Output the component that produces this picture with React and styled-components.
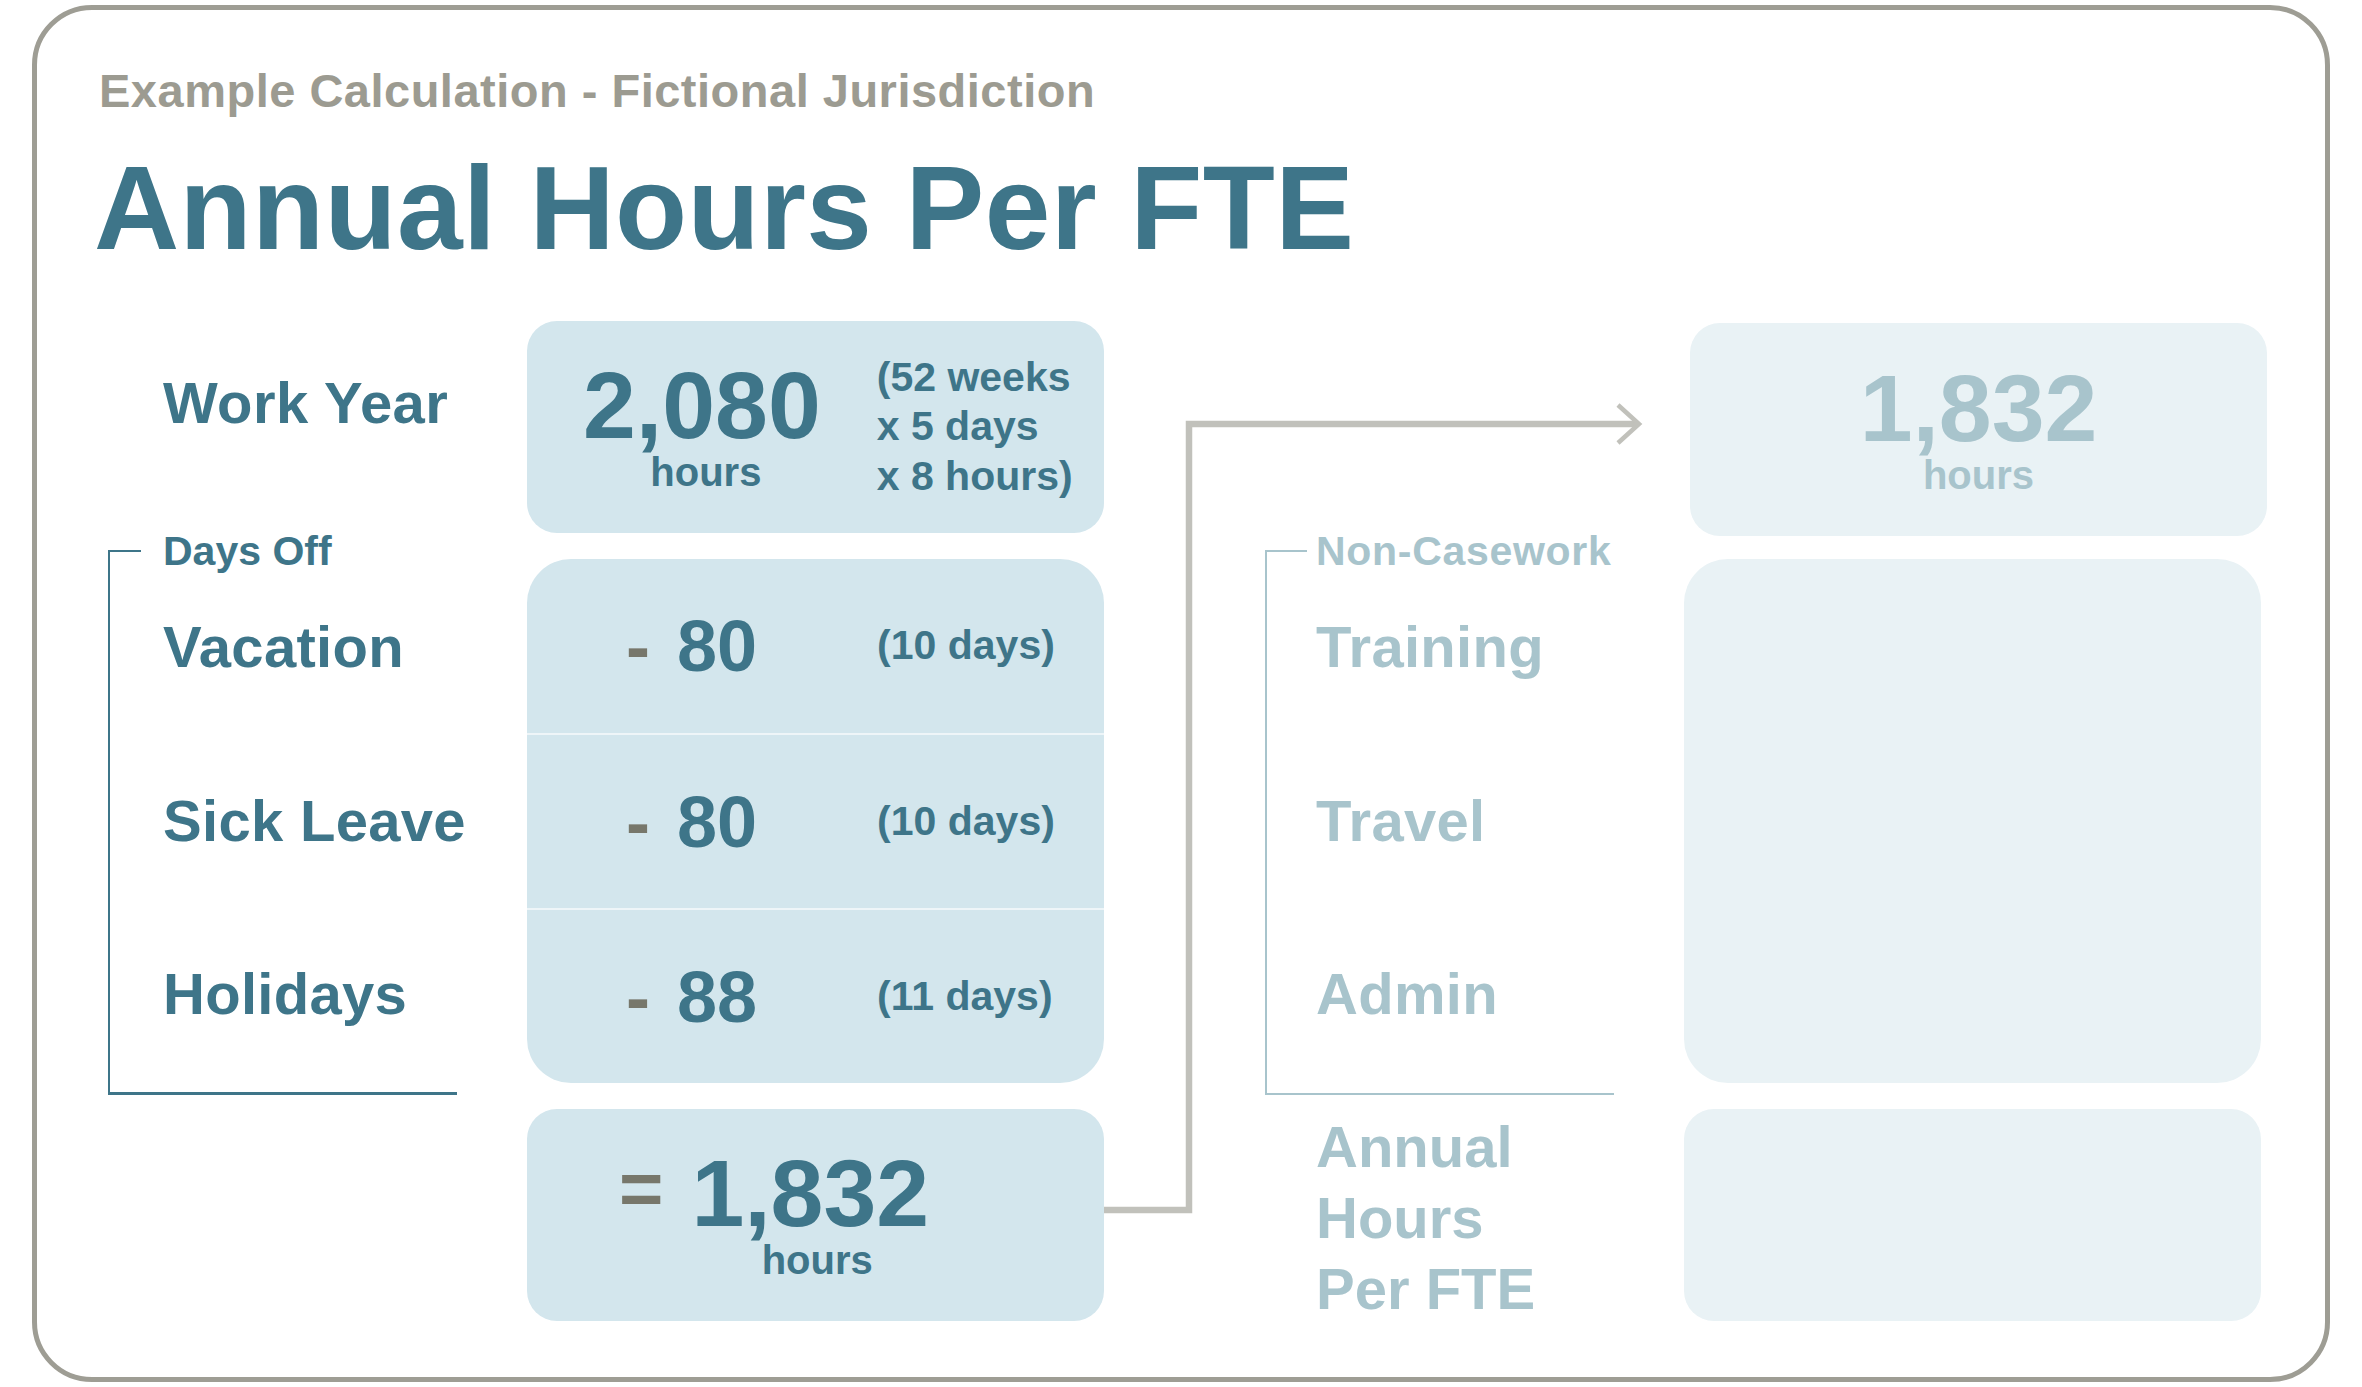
import React from 'react';
import styled, { createGlobalStyle } from 'styled-components';

const TEAL = '#3e7589';
const TEAL_FADED = '#a8c4cc';
const PANEL = '#d3e6ed';
const PANEL_FADED = '#e9f2f5';
const STONE = '#9c9b91';
const SLATE = '#77776b';
const WIRE = '#c1c1bb';

const GlobalStyle = createGlobalStyle`
  body {
    margin: 0;
    background: #fff;
    font-family: 'Liberation Sans', Arial, sans-serif;
    font-weight: 700;
  }
`;

const deductions = [
  { label: 'Vacation', hours: 80, days: 10 },
  { label: 'Sick Leave', hours: 80, days: 10 },
  { label: 'Holidays', hours: 88, days: 11 },
];

const nonCasework = ['Training', 'Travel', 'Admin'];

const App = () => (
  <>
    <GlobalStyle />
    <Card>
      <Eyebrow>Example Calculation - Fictional Jurisdiction</Eyebrow>
      <Title>Annual Hours Per FTE</Title>
      <Diagram>
        <Connector viewBox="0 0 580 1000">
          <path
            d="M0 889 H85 V103 H532"
            fill="none"
            stroke={WIRE}
            strokeWidth="6.5"
            strokeLinejoin="miter"
          />
          <polyline
            points="514,84 535,103 514,122"
            fill="none"
            stroke={WIRE}
            strokeWidth="4.5"
            strokeLinejoin="miter"
          />
        </Connector>

        <RowLabel>Work Year</RowLabel>
        <Panel $col={2} $row={1} $pad={56}>
          <Figure>
            <BigNumber>2,080</BigNumber>
            <Unit $offset={8}>hours</Unit>
          </Figure>
          <Note $gap={56}>
            (52 weeks
            <br />x 5 days
            <br />x 8 hours)
          </Note>
        </Panel>

        <Bracket $col={1} $color={TEAL} $tick={33} $weight={3}>
          <BracketHeading $inset={53} $color={TEAL}>
            Days Off
          </BracketHeading>
          {deductions.map(d => (
            <LabelRow key={d.label} $inset={53} $color={TEAL}>
              {d.label}
            </LabelRow>
          ))}
        </Bracket>
        <Panel $col={2} $row={2} $column $radius={44}>
          {deductions.map(d => (
            <DeductionRow key={d.label}>
              <Minus>-</Minus>
              <Amount>{d.hours}</Amount>
              <Note $gap={120}>({d.days} days)</Note>
            </DeductionRow>
          ))}
        </Panel>

        <Panel $col={2} $row={3} $pad={92}>
          <Equals>=</Equals>
          <Figure $gap={28}>
            <BigNumber>1,832</BigNumber>
            <Unit $offset={14}>hours</Unit>
          </Figure>
        </Panel>

        <Panel $col={5} $row={1} $faded $nudge $justify="center">
          <Figure $faded>
            <BigNumber>1,832</BigNumber>
            <Unit>hours</Unit>
          </Figure>
        </Panel>

        <Bracket $col={4} $color={TEAL_FADED} $tick={42} $weight={2.5}>
          <BracketHeading $inset={49} $color={TEAL_FADED} $spacing={0.7}>
            Non-Casework
          </BracketHeading>
          {nonCasework.map(label => (
            <LabelRow key={label} $inset={49} $color={TEAL_FADED}>
              {label}
            </LabelRow>
          ))}
        </Bracket>
        <Panel $col={5} $row={2} $faded $radius={44} />

        <StackedLabel>
          Annual
          <br />
          Hours
          <br />
          Per FTE
        </StackedLabel>
        <Panel $col={5} $row={3} $faded />
      </Diagram>
    </Card>
  </>
);

const Card = styled.main`
  box-sizing: border-box;
  width: 2298px;
  margin: 5px 0 5px 32px;
  padding: 53px 64px 56px 57px;
  border: 5px solid #9e9d94;
  border-radius: 60px;
`;

const Eyebrow = styled.p`
  margin: 0 0 0 5px;
  font-size: 47px;
  line-height: 56px;
  letter-spacing: 0.5px;
  color: ${STONE};
`;

const Title = styled.h1`
  margin: 24px 0 0;
  font-size: 118px;
  line-height: 130px;
  letter-spacing: 0.4px;
  font-weight: 700;
  color: ${TEAL};
`;

const Diagram = styled.section`
  display: grid;
  grid-template-columns: 419px 577px 161px 419px 577px;
  grid-template-rows: 212px 524px 212px;
  row-gap: 26px;
  margin: 48px 0 0 14px;
`;

const Connector = styled.svg`
  grid-column: 3 / 5;
  grid-row: 1 / 4;
  width: 580px;
  height: 1000px;
  pointer-events: none;
`;

const RowLabel = styled.div`
  grid-column: 1;
  grid-row: 1;
  padding: 47px 0 0 55px;
  font-size: 58px;
  line-height: 70px;
  letter-spacing: 0.4px;
  white-space: nowrap;
  color: ${TEAL};
`;

const Bracket = styled.div`
  grid-column: ${p => p.$col};
  grid-row: 2;
  position: relative;
  box-sizing: border-box;
  width: 349px;
  margin: -9px 0 -12px;
  border-left: 2px solid ${p => p.$color};
  border-bottom: ${p => p.$weight}px solid ${p => p.$color};

  &::before {
    content: '';
    position: absolute;
    top: 0;
    left: -2px;
    width: ${p => p.$tick}px;
    height: 2px;
    background: ${p => p.$color};
  }
`;

const BracketHeading = styled.div`
  margin: -23px 0 -15px;
  padding-left: ${p => p.$inset}px;
  font-size: 41px;
  line-height: 48px;
  letter-spacing: ${p => p.$spacing || 0}px;
  white-space: nowrap;
  color: ${p => p.$color};
`;

const LabelRow = styled.div`
  display: flex;
  align-items: center;
  height: 174px;
  padding-left: ${p => p.$inset}px;
  font-size: 58px;
  line-height: 70px;
  letter-spacing: 0.3px;
  white-space: nowrap;
  color: ${p => p.$color};

  & + & {
    height: 173px;
  }
`;

const StackedLabel = styled.div`
  grid-column: 4;
  grid-row: 3;
  align-self: center;
  padding: 4px 0 0 51px;
  font-size: 58px;
  line-height: 71px;
  color: ${TEAL_FADED};
`;

const Panel = styled.div`
  grid-column: ${p => p.$col};
  grid-row: ${p => p.$row};
  display: flex;
  flex-direction: ${p => (p.$column ? 'column' : 'row')};
  align-items: ${p => (p.$column ? 'stretch' : 'center')};
  justify-content: ${p => p.$justify || 'flex-start'};
  padding-left: ${p => p.$pad || 0}px;
  margin: ${p => (p.$nudge ? '2px -6px -3px 6px' : '0')};
  border-radius: ${p => p.$radius || 30}px;
  background: ${p => (p.$faded ? PANEL_FADED : PANEL)};
  overflow: hidden;
`;

const Figure = styled.div`
  display: flex;
  flex-direction: column;
  align-items: center;
  margin-left: ${p => p.$gap || 0}px;
  color: ${p => (p.$faded ? TEAL_FADED : TEAL)};
`;

const BigNumber = styled.span`
  font-size: 95px;
  line-height: 90px;
`;

const Unit = styled.span`
  padding-left: ${p => p.$offset || 0}px;
  font-size: 40px;
  line-height: 44px;
`;

const Note = styled.p`
  margin: 0 0 0 ${p => p.$gap}px;
  font-size: 41px;
  line-height: 49.5px;
  white-space: nowrap;
  color: ${TEAL};
`;

const DeductionRow = styled.div`
  box-sizing: border-box;
  display: flex;
  align-items: center;
  height: 174px;
  padding-left: 99px;

  & + & {
    height: 175px;
    border-top: 2px solid #eef5f8;
  }
`;

const Minus = styled.span`
  font-size: 72px;
  line-height: 80px;
  color: ${SLATE};
`;

const Amount = styled.span`
  margin-left: 27px;
  font-size: 72px;
  line-height: 80px;
  color: ${TEAL};
`;

const Equals = styled.span`
  margin-bottom: 52px;
  font-size: 76px;
  line-height: 90px;
  color: ${SLATE};
`;

export default App;
